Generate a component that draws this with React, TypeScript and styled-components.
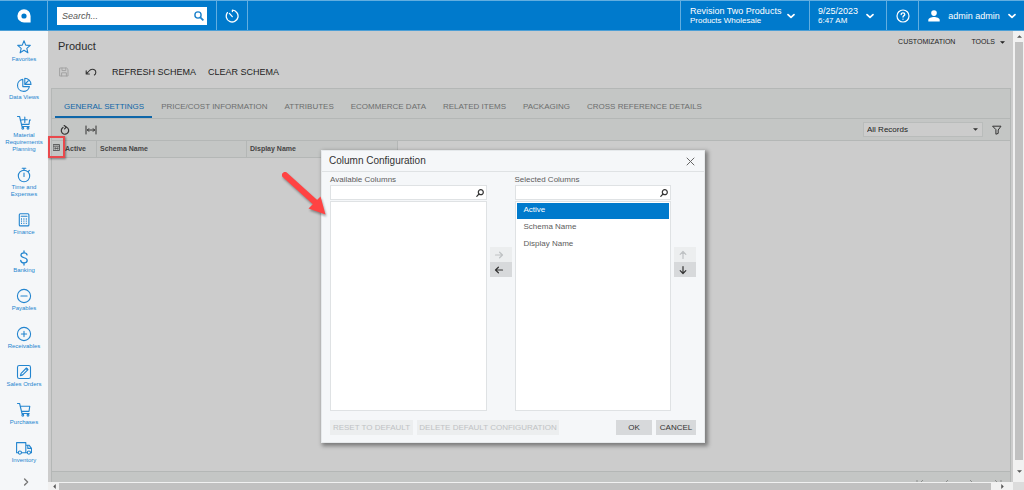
import React from "react";
import styled, { createGlobalStyle, css } from "styled-components";

const blue = "#007acc";
const line = "#b4b7b6";
const panel = "#c4c6c5";
const page = "#cccccc";
const sheet = "#f5f7f9";

const GlobalStyle = createGlobalStyle`
  *, *::before, *::after { box-sizing: border-box; }
  body { margin: 0; background: ${page}; font: 8px/10px "Liberation Sans", Arial, sans-serif; color: #333; overflow: hidden; }
  button, input, select { font: inherit; color: inherit; margin: 0; padding: 0; border: 0; background: none; border-radius: 0; outline: none; }
  h1, h2, p, ul { margin: 0; padding: 0; font-weight: normal; list-style: none; }
  a { color: inherit; text-decoration: none; }
  svg { display: block; flex: none; }
`;

const Shell = styled.div`
  min-height: 100vh;
  display: flex;
  flex-direction: column;
`;

/* ---------- top bar ---------- */

const TopBar = styled.header`
  display: flex;
  height: 31px;
  flex: none;
  background: ${blue};
  color: #fff;
  border-top: 1px solid #62aee0;
  border-bottom: 1px solid #4c9fd6;
`;

const barCell = css`
  display: flex;
  align-items: center;
  border-left: 1px solid #62aee0;
`;

const Logo = styled.a`
  width: 47px;
  display: flex;
  align-items: center;
  justify-content: center;
`;

const SearchCell = styled.form`
  ${barCell}
  width: 169px;
  padding: 0 9px;
`;

const SearchBox = styled.label`
  flex: 1;
  height: 18px;
  display: flex;
  align-items: center;
  padding: 0 3px 0 5px;
  background: #fff;
`;

const SearchInput = styled.input`
  flex: 1;
  min-width: 0;
  font-size: 9px;
  color: #333;
  &::placeholder { color: #555; font-style: italic; opacity: 1; }
`;

const BarButton = styled.button<{ $w: number; $pad?: string }>`
  ${barCell}
  width: ${(p) => p.$w}px;
  padding: ${(p) => p.$pad || "0 9px"};
  justify-content: ${(p) => (p.$pad === "0" ? "center" : "space-between")};
  border-left: 1px solid #62aee0;
  text-align: left;
`;

const BarSpacer = styled.div`
  ${barCell}
  flex: 1;
`;

const TwoLine = styled.span`
  display: flex;
  flex-direction: column;
  white-space: nowrap;
  strong { font: 9px/10px "Liberation Sans", Arial, sans-serif; }
`;

const UserName = styled.span`
  font-size: 9px;
  white-space: nowrap;
`;

/* ---------- side navigation ---------- */

const Body = styled.div`
  flex: 1;
  display: flex;
  min-height: 0;
`;

const Nav = styled.nav`
  width: 48px;
  flex: none;
  display: flex;
  flex-direction: column;
  align-items: center;
  justify-content: space-between;
  padding: 8px 0 4px;
  background: ${sheet};
`;

const NavList = styled.ul`
  display: flex;
  flex-direction: column;
  gap: 14px;
`;

const NavLink = styled.a`
  display: flex;
  flex-direction: column;
  align-items: center;
  gap: 1px;
  width: 46px;
  color: #2385cf;
  font-size: 6px;
  line-height: 7px;
  text-align: center;
`;

const MoreButton = styled.button`
  display: flex;
  padding-left: 4px;
  color: #777;
`;

/* ---------- work area ---------- */

const Work = styled.div`
  flex: 1;
  min-width: 0;
  display: grid;
  grid-template-columns: 1fr 11px;
  grid-template-rows: 1fr 8px;
`;

const Screen = styled.main`
  display: flex;
  flex-direction: column;
  padding: 0 2px 0 3px;
  min-width: 0;
  min-height: 0;
`;

const TitleRow = styled.div`
  display: flex;
  justify-content: space-between;
  height: 30px;
  padding: 6px 6px 0 7px;
`;

const Title = styled.h1`
  font-size: 11px;
  line-height: 18px;
  color: #2b2b2b;
`;

const Menu = styled.div`
  display: flex;
  gap: 16px;
  height: 10px;
  font-size: 7px;
`;

const TextButton = styled.button`
  display: flex;
  align-items: center;
  gap: 5px;
  color: #222;
  white-space: nowrap;
`;

const ActionRow = styled.div`
  display: flex;
  align-items: center;
  gap: 15px;
  height: 22px;
  margin-bottom: 5px;
  padding-left: 7px;
`;

const Group = styled.div<{ $gap: number }>`
  display: flex;
  align-items: center;
  gap: ${(p) => p.$gap}px;
  font-size: 9px;
`;

const IconButton = styled.button`
  display: flex;
  align-items: center;
  justify-content: center;
  width: 12px;
  height: 12px;
  color: #333;
  &:disabled { color: #a3a3a3; }
`;

const Panel = styled.section`
  flex: 1;
  min-height: 0;
  display: flex;
  flex-direction: column;
  border: 1px solid ${line};
  border-bottom: 0;
`;

const Tabs = styled.div`
  display: flex;
  height: 30px;
  padding: 8px 3px 0;
  background: ${panel};
  border-bottom: 1px solid ${line};
`;

const Tab = styled.button<{ $active?: boolean }>`
  padding: 0 8px 0 9px;
  white-space: nowrap;
  color: ${(p) => (p.$active ? "#0f66a8" : "#6c6e6e")};
  border-bottom: 2px solid ${(p) => (p.$active ? "#0f66a8" : "transparent")};
`;

const GridTools = styled.div`
  display: flex;
  align-items: center;
  gap: 8px;
  height: 22px;
  padding: 0 7px;
  background: ${panel};
  border-bottom: 1px solid ${line};
`;

const FilterPick = styled.div`
  margin-left: auto;
  display: flex;
  align-items: center;
  width: 120px;
  height: 15px;
  padding-right: 4px;
  background: ${page};
  border: 1px solid #b9bcbb;
`;

const FilterSelect = styled.select`
  flex: 1;
  height: 13px;
  padding-left: 3px;
  appearance: none;
  color: #222;
`;

const Grid = styled.table`
  table-layout: fixed;
  width: 346px;
  border-spacing: 0;
  font-size: 7px;
  th {
    height: 17px;
    padding: 0 0 0 3px;
    text-align: left;
    color: #444;
    background: ${panel};
    border-right: 1px solid ${line};
    border-bottom: 1px solid ${line};
  }
  th:first-child { padding: 0 0 3px 1px; border-right-color: transparent; }
`;

const ColumnsButton = styled.button`
  position: relative;
  display: flex;
  color: #555;
`;

const Highlight = styled.span`
  position: absolute;
  left: -5px;
  top: -8px;
  width: 17px;
  height: 22px;
  border: 2px solid #e9494d;
  box-shadow: 1px 1px 2px rgba(0, 0, 0, 0.4);
`;

const Pager = styled.div`
  display: flex;
  justify-content: flex-end;
  gap: 18px;
  height: 11px;
  margin-top: auto;
  padding: 8px 8px 0 0;
  overflow: hidden;
  background: ${panel};
  border-top: 1px solid ${line};
`;

const PagerButton = styled.button`
  width: 8px;
  height: 8px;
  color: #8c8f8e;
`;

/* ---------- scroll bars ---------- */

const ScrollBar = styled.div<{ $across?: boolean }>`
  display: flex;
  flex-direction: ${(p) => (p.$across ? "row" : "column")};
  background: #f1f1f1;
  color: #555;
  padding: ${(p) => (p.$across ? "1px 0 0 1px" : "0 1px 0 2px")};
`;

const ScrollStep = styled.button<{ $size: number }>`
  flex: 0 0 ${(p) => p.$size}px;
  display: flex;
  align-items: center;
  justify-content: center;
`;

const Thumb = styled.div`
  flex: 1;
  background: #c1c1c1;
`;

const Corner = styled.div`
  background: #dcdcdc;
`;

/* ---------- dialog ---------- */

const Dialog = styled.div`
  position: absolute;
  top: 150px;
  left: calc(50% - 191px);
  width: 384px;
  background: ${sheet};
  border: 1px solid #e6e9eb;
  box-shadow: 2px 2px 4px 1px rgba(0, 0, 0, 0.4);
  color: #5c5c5c;
`;

const DialogHead = styled.div`
  display: flex;
  align-items: center;
  justify-content: space-between;
  height: 21px;
  padding: 0 8px 0 7px;
  border-bottom: 1px solid #dfe2e4;
  color: #333;
  h2 { font-size: 10px; line-height: 12px; }
  button { color: #666; }
`;

const Picker = styled.div`
  display: flex;
  gap: 3px;
  padding: 3px 8px 0;
`;

const Side = styled.div`
  flex: 1;
  display: flex;
  flex-direction: column;
  label { height: 10px; }
`;

const Find = styled.div`
  display: flex;
  align-items: center;
  height: 15px;
  padding-right: 2px;
  background: #fff;
  border: 1px solid #dfe2e4;
  color: #333;
  input { flex: 1; min-width: 0; padding-left: 3px; }
`;

const List = styled.ul`
  height: 210px;
  margin-top: 1px;
  padding: 1px;
  background: #fff;
  border: 1px solid #dfe2e4;
`;

const Item = styled.li<{ $on?: boolean }>`
  height: 16px;
  margin-bottom: 1px;
  padding-left: 7px;
  line-height: 14px;
  background: ${(p) => (p.$on ? blue : "transparent")};
  color: ${(p) => (p.$on ? "#fff" : "#5c5c5c")};
`;

const Movers = styled.div`
  width: 22px;
  padding-top: 72px;
`;

const grey = css`
  background: #d7d9db;
  color: #333;
  &:disabled { background: #eceeef; color: #bfc2c4; }
`;

const MoveButton = styled.button`
  ${grey}
  display: flex;
  align-items: center;
  width: 22px;
  height: 15px;
  padding-left: 4px;
`;

const DialogFoot = styled.div`
  display: flex;
  gap: 4px;
  padding: 9px 8px 7px;
`;

const FootButton = styled.button<{ $w: number; $push?: boolean }>`
  ${grey}
  width: ${(p) => p.$w}px;
  height: 15px;
  margin-left: ${(p) => (p.$push ? "auto" : "0")};
  white-space: nowrap;
`;

const Arrow = styled.svg`
  position: absolute;
  left: calc(50% - 234px);
  top: 168px;
  filter: drop-shadow(1px 2px 1px rgba(0, 0, 0, 0.35));
`;

/* ---------- drawings ---------- */

const Icon = ({ size = 16, box = 16, w = 1, children }: { size?: number; box?: number; w?: number; children: React.ReactNode }) => (
  <svg width={size} height={size} viewBox={`0 0 ${box} ${box}`} fill="none" stroke="currentColor" strokeWidth={w} strokeLinejoin="round" strokeLinecap="round" aria-hidden="true">
    {children}
  </svg>
);

const Chevron = () => (
  <Icon size={8} box={8} w={1.7}><path d="M1 2.6 4 5.4 7 2.6" /></Icon>
);

const Caret = ({ dir = "down", size = 5 }: { dir?: "up" | "down" | "left" | "right"; size?: number }) => {
  const shape = { down: "M0 1.5H6L3 4.5Z", up: "M0 4.5H6L3 1.5Z", left: "M4.5 0V6L1.5 3Z", right: "M1.5 0V6L4.5 3Z" }[dir];
  return <svg width={size} height={size} viewBox="0 0 6 6" fill="currentColor" aria-hidden="true"><path d={shape} /></svg>;
};

const Lens = () => (
  <Icon size={8} box={8} w={1.2}><circle cx="4.8" cy="3.2" r="2.5" /><path d="M3 5 .8 7.3" /></Icon>
);

const navItems: { label: string; icon: React.ReactNode }[] = [
  { label: "Favorites", icon: <path d="M8 1.8 9.7 6.1 14.3 6.4 10.8 9.3 11.9 13.8 8 11.3 4.1 13.8 5.2 9.3 1.7 6.4 6.3 6.1Z" /> },
  { label: "Data Views", icon: <><path d="M6.8 2.4A6 6 0 1 0 13.4 9.6H6.8Z" /><path d="M8.8 1.2V7.4H15A6.2 6.2 0 0 0 8.8 1.2ZM8.8 7.4 13 3" /></> },
  { label: "Material Requirements Planning", icon: <><path d="M1.5 1.5H3.6L6 11.5H13.2M4.2 5H6.2M13.6 5 13 9.4H5.6M8.8 2V7.4M6.3 4.7H11.3M13.4 5H14.5" /><circle cx="6.8" cy="13.3" r=".9" /><circle cx="12" cy="13.3" r=".9" /></> },
  { label: "Time and Expenses", icon: <><circle cx="8" cy="9" r="5.7" /><path d="M8 3.2V1.2M6.2 1.2H9.8M8 6V9.4M12.3 4.5 13.4 3.4" /></> },
  { label: "Finance", icon: <><rect x="3.3" y="1.7" width="9.6" height="12.2" rx="1" /><path d="M5.2 4.2H11" /><path strokeWidth="1.3" strokeDasharray="1 1.4" strokeLinecap="butt" d="M5 7H11.2M5 9.2H11.2M5 11.4H11.2" /></> },
  { label: "Banking", icon: <path strokeWidth="1.3" d="M11 4.9C10.8 3.5 9.6 2.9 8 2.9 6.2 2.9 5 3.8 5 5.2 5 8.5 11.2 7 11.2 10.3 11.2 12 9.8 12.9 8 12.9 6.1 12.9 4.8 12 4.7 10.4M8 1V2.9M8 12.9V15" /> },
  { label: "Payables", icon: <><circle cx="8" cy="8" r="6.6" /><path d="M4.9 8H11.1" /></> },
  { label: "Receivables", icon: <><circle cx="8" cy="8" r="6.6" /><path d="M5.4 8H10.6M8 5.4V10.6" /></> },
  { label: "Sales Orders", icon: <><rect x="1.5" y="1.5" width="13" height="13" rx="1.8" /><path d="M4.4 11.6 5.1 9.3 10.4 4 12 5.6 6.7 10.9Z" /><path strokeWidth="1.6" d="M10.7 4.9 11.1 5.3" /></> },
  { label: "Purchases", icon: <><path d="M1.5 1.5H3.6L6 11.5H13.2M4.2 4.2H13.8L13 9.4H5.6" /><circle cx="6.8" cy="13.3" r=".9" /><circle cx="12" cy="13.3" r=".9" /></> },
  { label: "Inventory", icon: <><path d="M2.2 12.8H.6V2.6H9.8V12.8H5.6M9.8 5.2H13L15.5 8.4V12.8H14.6M9.8 12.8H11.2M11.8 5.4V8.4H15.4" /><circle cx="3.9" cy="12.6" r="1.6" /><circle cx="12.9" cy="12.6" r="1.6" /></> },
];

const tabs = ["GENERAL SETTINGS", "PRICE/COST INFORMATION", "ATTRIBUTES", "ECOMMERCE DATA", "RELATED ITEMS", "PACKAGING", "CROSS REFERENCE DETAILS"];

const pages: [string, string][] = [
  ["First page", "M1 0V8M7 0 3 4 7 8"],
  ["Previous page", "M6 0 2 4 6 8"],
  ["Next page", "M2 0 6 4 2 8"],
  ["Last page", "M1 0 5 4 1 8M7 0V8"],
];

const ColumnList = ({ id, title, items }: { id: string; title: string; items: string[] }) => (
  <Side>
    <label htmlFor={id}>{title}</label>
    <Find><input id={id} type="text" /><Lens /></Find>
    <List>
      {items.map((name, i) => <Item key={name} $on={i === 0}>{name}</Item>)}
    </List>
  </Side>
);

export default function App() {
  return (
    <Shell>
      <GlobalStyle />
      <TopBar>
        <Logo href="#" aria-label="Home">
          <svg width="14" height="14" viewBox="0 0 14 14" aria-hidden="true">
            <path fill="#fff" fillRule="evenodd" d="M7 .3A6.6 6.6 0 0 1 13.6 7V13.5H7A6.6 6.6 0 0 1 7 .3ZM7 4.4A2.6 2.6 0 1 0 7 9.6 2.6 2.6 0 0 0 7 4.4Z" />
          </svg>
        </Logo>
        <SearchCell>
          <SearchBox>
            <SearchInput type="text" placeholder="Search..." aria-label="Search" />
            <svg width="10" height="10" viewBox="0 0 10 10" fill="none" stroke="#1c82cc" strokeWidth="1.4" aria-hidden="true"><circle cx="4" cy="4" r="3.1" /><path strokeWidth="1.8" d="M6.3 6.3 9.4 9.4" /></svg>
          </SearchBox>
        </SearchCell>
        <BarButton $w={31} $pad="0" aria-label="History">
          <Icon size={14} box={14} w={1.3}><path d="M7.4 1.2A5.9 5.9 0 1 1 2.4 3.6M4.4 4.4 7.3 7.6M7.4 1.2V2.6" /></Icon>
        </BarButton>
        <BarSpacer />
        <BarButton $w={129} $pad="0 14px 0 9px">
          <TwoLine><strong>Revision Two Products</strong><span>Products Wholesale</span></TwoLine>
          <Chevron />
        </BarButton>
        <BarButton $w={77} $pad="0 12px 0 8px">
          <TwoLine><strong>9/25/2023</strong><span>6:47 AM</span></TwoLine>
          <Chevron />
        </BarButton>
        <BarButton $w={32} $pad="0" aria-label="Help">
          <Icon size={14} box={14} w={1.2}><circle cx="7" cy="7" r="6" /><path strokeWidth="1.3" d="M5.2 5.6C5.2 4.4 6 3.8 7 3.8S8.8 4.4 8.8 5.4C8.8 6.6 7 6.7 7 8.1M7 10.1V10.2" /></Icon>
        </BarButton>
        <BarButton $w={106} $pad="0 8px 0 9px">
          <svg width="12" height="12" viewBox="0 0 12 12" fill="#fff" aria-hidden="true"><circle cx="6" cy="3.1" r="2.8" /><path d="M.3 11.4V10C.3 8 3.5 7 6 7S11.7 8 11.7 10V11.4Z" /></svg>
          <UserName>admin admin</UserName>
          <Chevron />
        </BarButton>
      </TopBar>

      <Body>
        <Nav>
          <NavList>
            {navItems.map((n) => (
              <li key={n.label}><NavLink href="#"><Icon w={1.1}>{n.icon}</Icon>{n.label}</NavLink></li>
            ))}
          </NavList>
          <MoreButton aria-label="More"><Icon size={8} box={8} w={1.4}><path d="M2.6 1 5.6 4 2.6 7" /></Icon></MoreButton>
        </Nav>

        <Work>
          <Screen>
            <TitleRow>
              <Title>Product</Title>
              <Menu>
                <TextButton>CUSTOMIZATION</TextButton>
                <TextButton>TOOLS <Caret /></TextButton>
              </Menu>
            </TitleRow>
            <ActionRow>
              <Group $gap={15}>
                <IconButton disabled aria-label="Save"><Icon size={10} box={10} w={1}><path d="M1 1H7.6L9 2.4V9H1ZM3 1V3.6H6.8V1M2.6 9V5.8H7.4V9" /></Icon></IconButton>
                <IconButton aria-label="Undo"><Icon size={12} box={12} w={1.1}><path d="M1.2 8H4.4M1.2 8V4.8M1.4 7.8 4 5C5 3.8 6 3.2 7.2 3.2 9.4 3.2 10.8 4.6 10.8 6.4 10.8 7.6 10.3 8.4 9.4 9" /></Icon></IconButton>
              </Group>
              <Group $gap={12}>
                <TextButton>REFRESH SCHEMA</TextButton>
                <TextButton>CLEAR SCHEMA</TextButton>
              </Group>
            </ActionRow>

            <Panel>
              <Tabs role="tablist">
                {tabs.map((t, i) => <Tab key={t} role="tab" aria-selected={i === 0} $active={i === 0}>{t}</Tab>)}
              </Tabs>
              <GridTools>
                <Group $gap={14}>
                  <IconButton aria-label="Refresh"><Icon size={10} box={10} w={1.2}><path d="M3 2.4A3.7 3.7 0 1 0 6.6 2.2" /><path d="M4.2.6 6.2 2.1 4.6 3.9" /></Icon></IconButton>
                  <IconButton aria-label="Fit to width"><Icon size={12} box={12}><path d="M1 2V10M11 2V10M2.4 6H9.6M3.8 4.6 2.4 6 3.8 7.4M8.2 4.6 9.6 6 8.2 7.4" /></Icon></IconButton>
                </Group>
                <FilterPick>
                  <FilterSelect aria-label="Filter"><option>All Records</option></FilterSelect>
                  <Caret />
                </FilterPick>
                <IconButton aria-label="Filter settings"><Icon size={10} box={10}><path d="M1 1.2H9L6.2 5V8.4L3.9 9.2V5Z" /></Icon></IconButton>
              </GridTools>
              <Grid>
                <colgroup><col width="10" /><col width="35" /><col width="150" /><col width="151" /></colgroup>
                <thead>
                  <tr>
                    <th>
                      <ColumnsButton aria-label="Configure columns">
                        <Icon size={7} box={7} w={0.9}><path d="M.5 .5H6.5V6.5H.5ZM.5 2.2H6.5M2 4.4H5M2.2 3.6V5.2M4.8 3.6V5.2" /></Icon>
                        <Highlight />
                      </ColumnsButton>
                    </th>
                    <th>Active</th>
                    <th>Schema Name</th>
                    <th>Display Name</th>
                  </tr>
                </thead>
              </Grid>
              <Pager>
                {pages.map(([label, d]) => (
                  <PagerButton key={label} aria-label={label}><Icon size={8} box={8}><path d={d} /></Icon></PagerButton>
                ))}
              </Pager>
            </Panel>
          </Screen>
          <ScrollBar>
            <ScrollStep $size={11} aria-label="Scroll up"><Caret dir="up" /></ScrollStep>
            <Thumb />
            <ScrollStep $size={22} aria-label="Scroll down"><Caret /></ScrollStep>
          </ScrollBar>
          <ScrollBar $across>
            <ScrollStep $size={10} aria-label="Scroll left"><Caret dir="left" /></ScrollStep>
            <Thumb />
            <ScrollStep $size={22} aria-label="Scroll right"><Caret dir="right" /></ScrollStep>
          </ScrollBar>
          <Corner />
        </Work>
      </Body>

      <Dialog role="dialog" aria-labelledby="dialog-title">
        <DialogHead>
          <h2 id="dialog-title">Column Configuration</h2>
          <IconButton aria-label="Close"><Icon size={9} box={9}><path d="M1 1 8 8M8 1 1 8" /></Icon></IconButton>
        </DialogHead>
        <Picker>
          <ColumnList id="available" title="Available Columns" items={[]} />
          <Movers>
            <MoveButton disabled aria-label="Add"><Icon size={10} box={10} w={1.2}><path d="M1.5 5H8.5M5.6 2.2 8.5 5 5.6 7.8" /></Icon></MoveButton>
            <MoveButton aria-label="Remove"><Icon size={10} box={10} w={1.2}><path d="M8.5 5H1.5M4.4 2.2 1.5 5 4.4 7.8" /></Icon></MoveButton>
          </Movers>
          <ColumnList id="selected" title="Selected Columns" items={["Active", "Schema Name", "Display Name"]} />
          <Movers>
            <MoveButton disabled aria-label="Move up"><Icon size={10} box={10} w={1.2}><path d="M5 8.5V1.5M2.2 4.4 5 1.5 7.8 4.4" /></Icon></MoveButton>
            <MoveButton aria-label="Move down"><Icon size={10} box={10} w={1.2}><path d="M5 1.5V8.5M2.2 5.6 5 8.5 7.8 5.6" /></Icon></MoveButton>
          </Movers>
        </Picker>
        <DialogFoot>
          <FootButton $w={83} disabled>RESET TO DEFAULT</FootButton>
          <FootButton $w={142} disabled>DELETE DEFAULT CONFIGURATION</FootButton>
          <FootButton $w={36} $push>OK</FootButton>
          <FootButton $w={40}>CANCEL</FootButton>
        </DialogFoot>
      </Dialog>

      <Arrow width="50" height="52" viewBox="0 0 50 52" aria-hidden="true">
        <path d="M7 7 38 35" stroke="#ff4343" strokeWidth="6" strokeLinecap="round" />
        <path d="M47.5 46.5 30.5 40.5 42.5 28.5Z" fill="#ff4343" />
      </Arrow>
    </Shell>
  );
}
